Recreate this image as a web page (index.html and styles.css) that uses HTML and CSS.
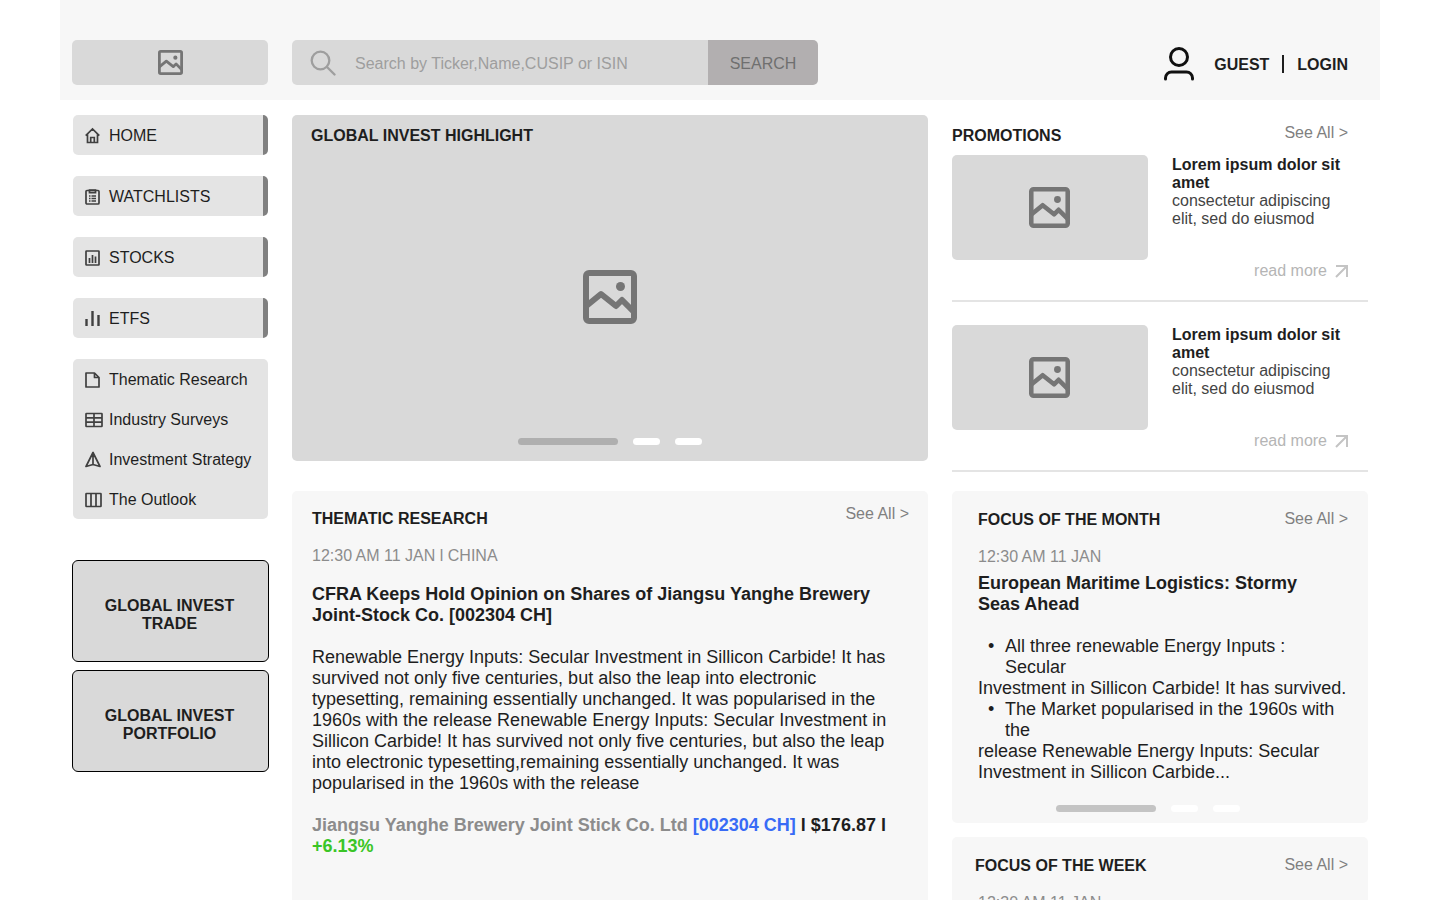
FILE: index.html
```html
<!DOCTYPE html>
<html lang="en">
<head>
<meta charset="utf-8">
<title>Global Invest</title>
<link rel="stylesheet" href="styles.css">
</head>
<body>
<svg class="defs" aria-hidden="true">
  <symbol id="picture" viewBox="0 0 18 18">
    <rect x="1" y="1" width="16" height="16" rx="1" fill="none" stroke="currentColor" stroke-width="2"/>
    <path d="M1 12.1 6 8l5 4 2-2 4 4" fill="none" stroke="currentColor" stroke-width="2" stroke-linejoin="round"/>
    <circle cx="12.5" cy="5.5" r="1.5" fill="currentColor"/>
  </symbol>
  <symbol id="arrow" viewBox="0 0 14 14">
    <path d="M2 2h11v11M13 2 2 13" fill="none" stroke="currentColor" stroke-width="2"/>
  </symbol>
</svg>
<div class="page">
  <header class="header">
    <a class="logo" href="#" aria-label="Home page"><svg width="25" height="25"><use href="#picture"/></svg></a>
    <form class="search">
      <label class="search-field">
        <svg width="26" height="26" viewBox="0 0 26 26" fill="none" stroke="currentColor" stroke-width="2.300" stroke-linecap="round" aria-hidden="true"><circle cx="10.5" cy="10.5" r="8.800"/><path d="m17 17 7.5 7.5"/></svg>
        <input type="search" aria-label="Search" placeholder="Search by Ticker,Name,CUSIP or ISIN">
      </label>
      <button class="search-button" type="button">SEARCH</button>
    </form>
    <div class="account">
      <svg width="32" height="34" viewBox="0 0 32 34" fill="none" stroke="#111" stroke-width="3" stroke-linecap="round" aria-hidden="true"><circle cx="16" cy="10" r="8.500"/><path d="M2.500 32v-1a6 6 0 0 1 6-6h15a6 6 0 0 1 6 6v1"/></svg>
      <a href="#">GUEST</a>
      <span class="divider"></span>
      <a href="#">LOGIN</a>
    </div>
  </header>

  <div class="layout">
    <aside class="sidebar">
      <nav class="nav" aria-label="Main">
        <a class="nav-item" href="#"><svg viewBox="0 0 18 18"><path d="M.7 8.700 7.500 2l6.800 6.700M2.500 7.500v8h10v-8M5.700 15.500v-5h3.600v5"/></svg>HOME</a>
        <a class="nav-item" href="#"><svg viewBox="0 0 18 18"><rect x="1" y="2.500" width="13" height="13.500" rx="1"/><path d="M4.500 2v2.700h6V2z"/><path d="M4 8h1.500M4 10.500h1.500M4 13h1.500M6.500 8H11M6.500 10.500H11M6.500 13H11" stroke-width="1.300"/></svg>WATCHLISTS</a>
        <a class="nav-item" href="#"><svg viewBox="0 0 18 18"><rect x="1" y="2" width="13" height="14" rx=".5"/><path d="M4.500 9v5M7.500 6v8M10.500 7.500V14"/></svg>STOCKS</a>
        <a class="nav-item" href="#"><svg viewBox="0 0 18 18"><path d="M1.500 9v7M7.500 1v15M13.500 5v11" stroke-width="2.400"/></svg>ETFS</a>
        <div class="nav-group">
          <a href="#"><svg viewBox="0 0 18 18"><path d="M1 2h8.500L14 6.500V16H1zM9.500 2v4.500H14" stroke-linejoin="round"/></svg>Thematic Research</a>
          <a href="#"><svg viewBox="0 0 18 18"><rect x="1" y="2.500" width="16" height="13" rx=".5"/><path d="M1 6.800h16M1 11.200h16M9 2.500v13"/></svg>Industry Surveys</a>
          <a href="#"><svg viewBox="0 0 18 18"><path d="M8 1.500 1 15.500l7-2 7 2zM8 2v11.500" stroke-linejoin="round"/></svg>Investment Strategy</a>
          <a href="#"><svg viewBox="0 0 18 18"><rect x="1" y="2.500" width="15" height="13" rx=".5"/><path d="M6 2.500v13M11 2.500v13"/></svg>The Outlook</a>
        </div>
      </nav>
      <a class="tile" href="#">GLOBAL INVEST<br>TRADE</a>
      <a class="tile" href="#">GLOBAL INVEST<br>PORTFOLIO</a>
    </aside>

    <main class="main">
      <section class="highlight">
        <h2>GLOBAL INVEST HIGHLIGHT</h2>
        <svg class="highlight-picture" width="54" height="54"><use href="#picture"/></svg>
        <div class="pager"><button class="current" aria-label="Slide 1"></button><button aria-label="Slide 2"></button><button aria-label="Slide 3"></button></div>
      </section>
      <section class="card research">
        <div class="card-head"><h2>THEMATIC RESEARCH</h2><a class="see-all" href="#">See All &gt;</a></div>
        <p class="date">12:30 AM 11 JAN l CHINA</p>
        <h3>CFRA Keeps Hold Opinion on Shares of Jiangsu Yanghe Brewery<br>Joint-Stock Co. [002304 CH]</h3>
        <p class="text">Renewable Energy Inputs: Secular Investment in Sillicon Carbide! It has<br>survived not only five centuries, but also the leap into electronic<br>typesetting, remaining essentially unchanged. It was popularised in the<br>1960s with the release Renewable Energy Inputs: Secular Investment in<br>Sillicon Carbide! It has survived not only five centuries, but also the leap<br>into electronic typesetting,remaining essentially unchanged. It was<br>popularised in the 1960s with the release</p>
        <p class="quote"><span class="company">Jiangsu Yanghe Brewery Joint Stick Co. Ltd</span> <a href="#">[002304 CH]</a> l $176.87 l<br><span class="gain">+6.13%</span></p>
      </section>
    </main>

    <aside class="side">
      <section class="promotions">
        <div class="promo-head"><h2>PROMOTIONS</h2><a class="see-all" href="#">See All &gt;</a></div>
        <article class="promo">
          <div class="thumb"><svg width="41" height="41"><use href="#picture"/></svg></div>
          <div class="promo-body">
            <h3>Lorem ipsum dolor sit amet</h3>
            <p>consectetur adipiscing elit, sed do eiusmod</p>
            <a class="more" href="#">read more <svg width="14" height="14"><use href="#arrow"/></svg></a>
          </div>
        </article>
        <article class="promo">
          <div class="thumb"><svg width="41" height="41"><use href="#picture"/></svg></div>
          <div class="promo-body">
            <h3>Lorem ipsum dolor sit amet</h3>
            <p>consectetur adipiscing elit, sed do eiusmod</p>
            <a class="more" href="#">read more <svg width="14" height="14"><use href="#arrow"/></svg></a>
          </div>
        </article>
      </section>
      <section class="card focus">
        <div class="card-head"><h2>FOCUS OF THE MONTH</h2><a class="see-all" href="#">See All &gt;</a></div>
        <p class="date">12:30 AM 11 JAN</p>
        <h3>European Maritime Logistics: Stormy<br>Seas Ahead</h3>
        <div class="text">
          <ul><li>All three renewable Energy Inputs :<br>Secular</li></ul>
          <p>Investment in Sillicon Carbide! It has survived.</p>
          <ul><li>The Market popularised in the 1960s with<br>the</li></ul>
          <p>release Renewable Energy Inputs: Secular<br>Investment in Sillicon Carbide...</p>
        </div>
        <div class="pager"><button class="current" aria-label="Slide 1"></button><button aria-label="Slide 2"></button><button aria-label="Slide 3"></button></div>
      </section>
      <section class="card focus week">
        <div class="card-head"><h2>FOCUS OF THE WEEK</h2><a class="see-all" href="#">See All &gt;</a></div>
        <p class="date">12:30 AM 11 JAN</p>
      </section>
    </aside>
  </div>
</div>
</body>
</html>
```
FILE: styles.css
```css
* { box-sizing: border-box; }
body {
  margin: 0;
  background: #fff;
  color: #1e1e1e;
  font: 16px/18px "Liberation Sans", Arial, sans-serif;
}
h2, h3, p, ul { margin: 0; padding: 0; font-size: inherit; }
a { color: inherit; text-decoration: none; }
button, input { font: inherit; border: 0; padding: 0; }
svg { display: block; flex: none; }
.defs { position: absolute; width: 0; height: 0; }

.page { height: 100vh; margin: 0 60px; overflow-x: hidden; overflow-y: auto; scrollbar-width: none; }

.header {
  display: flex;
  align-items: center;
  gap: 24px;
  padding: 40px 32px 15px 12px;
  background: #f7f7f7;
}
.logo {
  display: grid;
  place-items: center;
  width: 196px;
  height: 45px;
  border-radius: 5px;
  background: #d9d9d9;
  color: #757575;
}
.search {
  display: flex;
  flex: 0 1 526px;
  height: 45px;
  border-radius: 5px;
  overflow: hidden;
}
.search-field {
  display: flex;
  flex: 1;
  align-items: center;
  gap: 19px;
  padding-left: 18px;
  background: #d9d9d9;
  color: #9e9e9e;
}
.search-field input { flex: 1; min-width: 0; padding-top: 2px; background: none; outline: 0; }
.search-field input::placeholder { color: #9e9e9e; opacity: 1; }
.search-button { width: 110px; padding-top: 2px; background: #b2afb0; color: #6f6f6f; }
.account {
  display: flex;
  align-items: center;
  gap: 13px;
  margin-left: auto;
  padding-top: 2px;
  font-weight: bold;
}
.account svg { margin-right: 6px; }
.account a { padding-top: 2px; }
.divider { width: 2px; height: 18px; background: #1e1e1e; }

.layout {
  display: grid;
  grid-template-columns: 196px minmax(0, 636fr) minmax(0, 416fr);
  gap: 24px;
  padding: 15px 12px 0;
}

.nav { display: flex; flex-direction: column; gap: 21px; margin: 0 0 41px 1px; }
.nav a { display: flex; align-items: center; gap: 6px; height: 40px; padding: 2px 0 0 12px; white-space: nowrap; }
.nav svg { width: 18px; height: 18px; margin-bottom: 1px; fill: none; stroke: #404040; stroke-width: 1.7; }
.nav-item { border-radius: 5px; background: linear-gradient(to left, #808080 5px, #e4e4e4 5px); }
.nav-group { border-radius: 5px; background: #e4e4e4; }
.tile {
  display: grid;
  place-content: center;
  height: 102px;
  margin: 0 -1px 8px 0;
  padding: 8px 2px 0 0;
  border: 1px solid #000;
  border-radius: 6px;
  background: #d9d9d9;
  font-weight: bold;
  text-align: center;
}

.main { display: flex; flex-direction: column; gap: 30px; }
.highlight {
  display: flex;
  flex-direction: column;
  align-items: center;
  justify-content: space-between;
  height: 346px;
  padding: 12px 19px 16px;
  border-radius: 5px;
  background: #d9d9d9;
}
.highlight h2 { align-self: flex-start; }
.highlight-picture { margin-top: 11px; color: #757575; }
.pager { display: flex; justify-content: center; gap: 15px; }
.pager button { width: 27px; height: 7px; border-radius: 4px; background: #fff; }
.pager .current { width: 100px; background: #afafaf; }

.card { border-radius: 5px; background: #f7f7f7; }
.card-head { display: flex; justify-content: space-between; }
.see-all { color: #808080; }
.date { color: #8c8c8c; }
.card h3, .text, .quote { font-size: 18px; line-height: 21px; white-space: nowrap; }
.research { flex: 1; padding: 19px 19px 50px 20px; }
.research .see-all { margin-top: -5px; }
.research .date { margin: 19px 0; }
.research .text { margin: 21px 0; }
.quote { font-weight: bold; }
.company { color: #8c8c8c; }
.quote a { color: #386bf6; }
.gain { color: #3ac526; }

.side { display: flex; flex-direction: column; }
.promo-head { display: flex; justify-content: space-between; height: 40px; padding: 9px 20px 0 0; }
.promo-head h2 { padding-top: 3px; }
.promo {
  display: flex;
  gap: 24px;
  height: 147px;
  margin-bottom: 23px;
  border-bottom: 2px solid #e4e4e4;
}
.promo:last-child { margin-bottom: 19px; }
.thumb {
  display: grid;
  place-items: center;
  flex: 0 1 196px;
  height: 105px;
  padding-right: 1px;
  border-radius: 5px;
  background: #d9d9d9;
  color: #757575;
}
.promo-body { display: flex; flex: 1; flex-direction: column; padding: 1px 20px 20px 0; }
.promo-body p { color: #444; }
.more { display: flex; justify-content: flex-end; align-items: center; gap: 7px; margin-top: auto; color: #b5b5b5; }
.more svg { color: #c4c4c4; }

.focus { padding: 20px 20px 11px 26px; margin-bottom: 14px; }
.focus .see-all { margin-top: -1px; }
.focus .date { margin: 19px 0 7px; }
.focus .text { margin: 21px 0 22px; }
.focus li { margin-left: 27px; list-style: none; }
.focus li::before { content: "•"; display: inline-block; width: 17px; margin-left: -17px; }
.focus .pager { padding-right: 30px; }
.focus .pager .current { background: #c4c4c4; }
.week { padding-bottom: 100px; }
.week h2 { margin-left: -3px; }
```
